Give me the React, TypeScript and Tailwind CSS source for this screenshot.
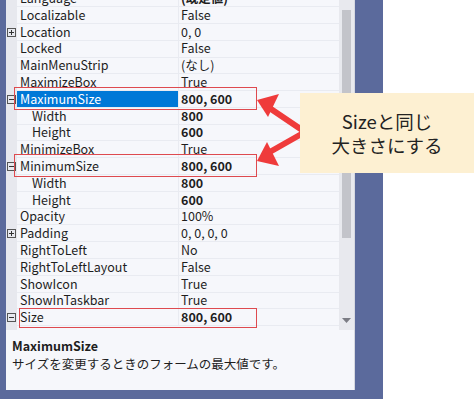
import React from "react";

type Row = {
  name: string;
  value: string;
  bold?: boolean;
  indent?: boolean;
  expand?: "plus" | "minus";
  selected?: boolean;
};

const rows: Row[] = [
  { name: "Language", value: "(既定値)", bold: true },
  { name: "Localizable", value: "False" },
  { name: "Location", value: "0, 0", expand: "plus" },
  { name: "Locked", value: "False" },
  { name: "MainMenuStrip", value: "(なし)" },
  { name: "MaximizeBox", value: "True" },
  { name: "MaximumSize", value: "800, 600", bold: true, expand: "minus", selected: true },
  { name: "Width", value: "800", bold: true, indent: true },
  { name: "Height", value: "600", bold: true, indent: true },
  { name: "MinimizeBox", value: "True" },
  { name: "MinimumSize", value: "800, 600", bold: true, expand: "minus" },
  { name: "Width", value: "800", bold: true, indent: true },
  { name: "Height", value: "600", bold: true, indent: true },
  { name: "Opacity", value: "100%" },
  { name: "Padding", value: "0, 0, 0, 0", expand: "plus" },
  { name: "RightToLeft", value: "No" },
  { name: "RightToLeftLayout", value: "False" },
  { name: "ShowIcon", value: "True" },
  { name: "ShowInTaskbar", value: "True" },
  { name: "Size", value: "800, 600", bold: true, expand: "minus" },
];

function ExpandBox({ kind }: { kind: "plus" | "minus" }) {
  return (
    <svg width="9" height="9" viewBox="0 0 9 9" className="block">
      <rect x="0.5" y="0.5" width="8" height="8" fill="none" stroke="#555" strokeWidth="1" />
      <line x1="2" y1="4.5" x2="7" y2="4.5" stroke="#333" strokeWidth="1" />
      {kind === "plus" && <line x1="4.5" y1="2" x2="4.5" y2="7" stroke="#333" strokeWidth="1" />}
    </svg>
  );
}

function PropRow({ row }: { row: Row }) {
  return (
    <div className="flex h-[16.8px] shrink-0">
      <div className="w-[11px] bg-[#e7e8ee] flex items-center justify-center">
        {row.expand && <ExpandBox kind={row.expand} />}
      </div>
      <div
        className={
          row.selected
            ? "w-[161px] flex items-center bg-[#0078d7] text-white border-b border-[#e9ebf1]"
            : "w-[161px] flex items-center text-[#1e1e1e] border-b border-[#e9ebf1]"
        }
      >
        <span className={row.indent ? "pl-[15px] whitespace-nowrap" : "pl-[3px] whitespace-nowrap"}>
          {row.name}
        </span>
      </div>
      <div className="flex-1 flex items-center pl-[2px] border-l border-b border-[#e9ebf1] text-[#1e1e1e]">
        <span className={row.bold ? "font-bold whitespace-nowrap" : "whitespace-nowrap"}>{row.value}</span>
      </div>
    </div>
  );
}

export default function App() {
  return (
    <div className="relative w-[474px] h-[399px] overflow-hidden bg-white font-['Noto_Sans_CJK_JP',sans-serif] text-[12.5px]">
      <div className="w-[383px] h-[399px] bg-[#5b6a9c] pl-[6px] pr-[28px] pb-[9px]">
        <div className="h-full bg-[#f6f7fb] border-r border-[#d6d8e0] flex flex-col">
          <div className="h-[330px] flex overflow-hidden">
            <div className="flex-1 flex flex-col mt-[-9.7px] leading-none">
              {rows.map((r, i) => (
                <PropRow key={i} row={r} />
              ))}
              <div className="flex flex-1">
                <div className="w-[11px] bg-[#e7e8ee]" />
              </div>
            </div>
            <div className="w-[15px] bg-[#e8e9ee] flex flex-col items-center pt-[10px]">
              <div className="w-[9px] h-[228px] bg-[#c3c4ca]" />
              <div className="flex-1" />
              <svg width="9" height="6" viewBox="0 0 9 6" className="mb-[6px]">
                <polygon points="0,0 9,0 4.5,5" fill="#7b7c84" />
              </svg>
            </div>
          </div>
          <div className="flex-1 px-[6px] pt-[7px] text-[#1e1e1e]">
            <div className="font-bold leading-[17px]">MaximumSize</div>
            <div className="leading-[17px] mt-[1px]">サイズを変更するときのフォームの最大値です。</div>
          </div>
        </div>
      </div>

      {/* red annotation boxes */}
      <div className="absolute left-[14px] top-[87px] w-[243px] h-[23px] border-[1.5px] border-[#de4a4f]" />
      <div className="absolute left-[14px] top-[154px] w-[243px] h-[23px] border-[1.5px] border-[#de4a4f]" />
      <div className="absolute left-[19px] top-[308px] w-[238px] h-[20px] border-[1.5px] border-[#de4a4f]" />

      {/* arrows */}
      <svg className="absolute left-0 top-0" width="474" height="399" viewBox="0 0 474 399">
        <g stroke="#ef3b3b" strokeWidth="6" strokeLinecap="round" fill="none">
          <line x1="305" y1="132" x2="268" y2="107" />
          <line x1="305" y1="132" x2="268" y2="153" />
        </g>
        <polygon points="257,100 279,94 268,117" fill="#ef3b3b" />
        <polygon points="257,161 267,142 279,166" fill="#ef3b3b" />
      </svg>

      {/* callout */}
      <div className="absolute left-[300px] top-[93px] w-[174px] h-[80px] bg-[#fdf0d2] flex flex-col items-center justify-center text-[18.5px] leading-[24px] text-[#222] font-['Noto_Sans_CJK_JP',sans-serif]">
        <div>Sizeと同じ</div>
        <div>大きさにする</div>
      </div>
    </div>
  );
}
